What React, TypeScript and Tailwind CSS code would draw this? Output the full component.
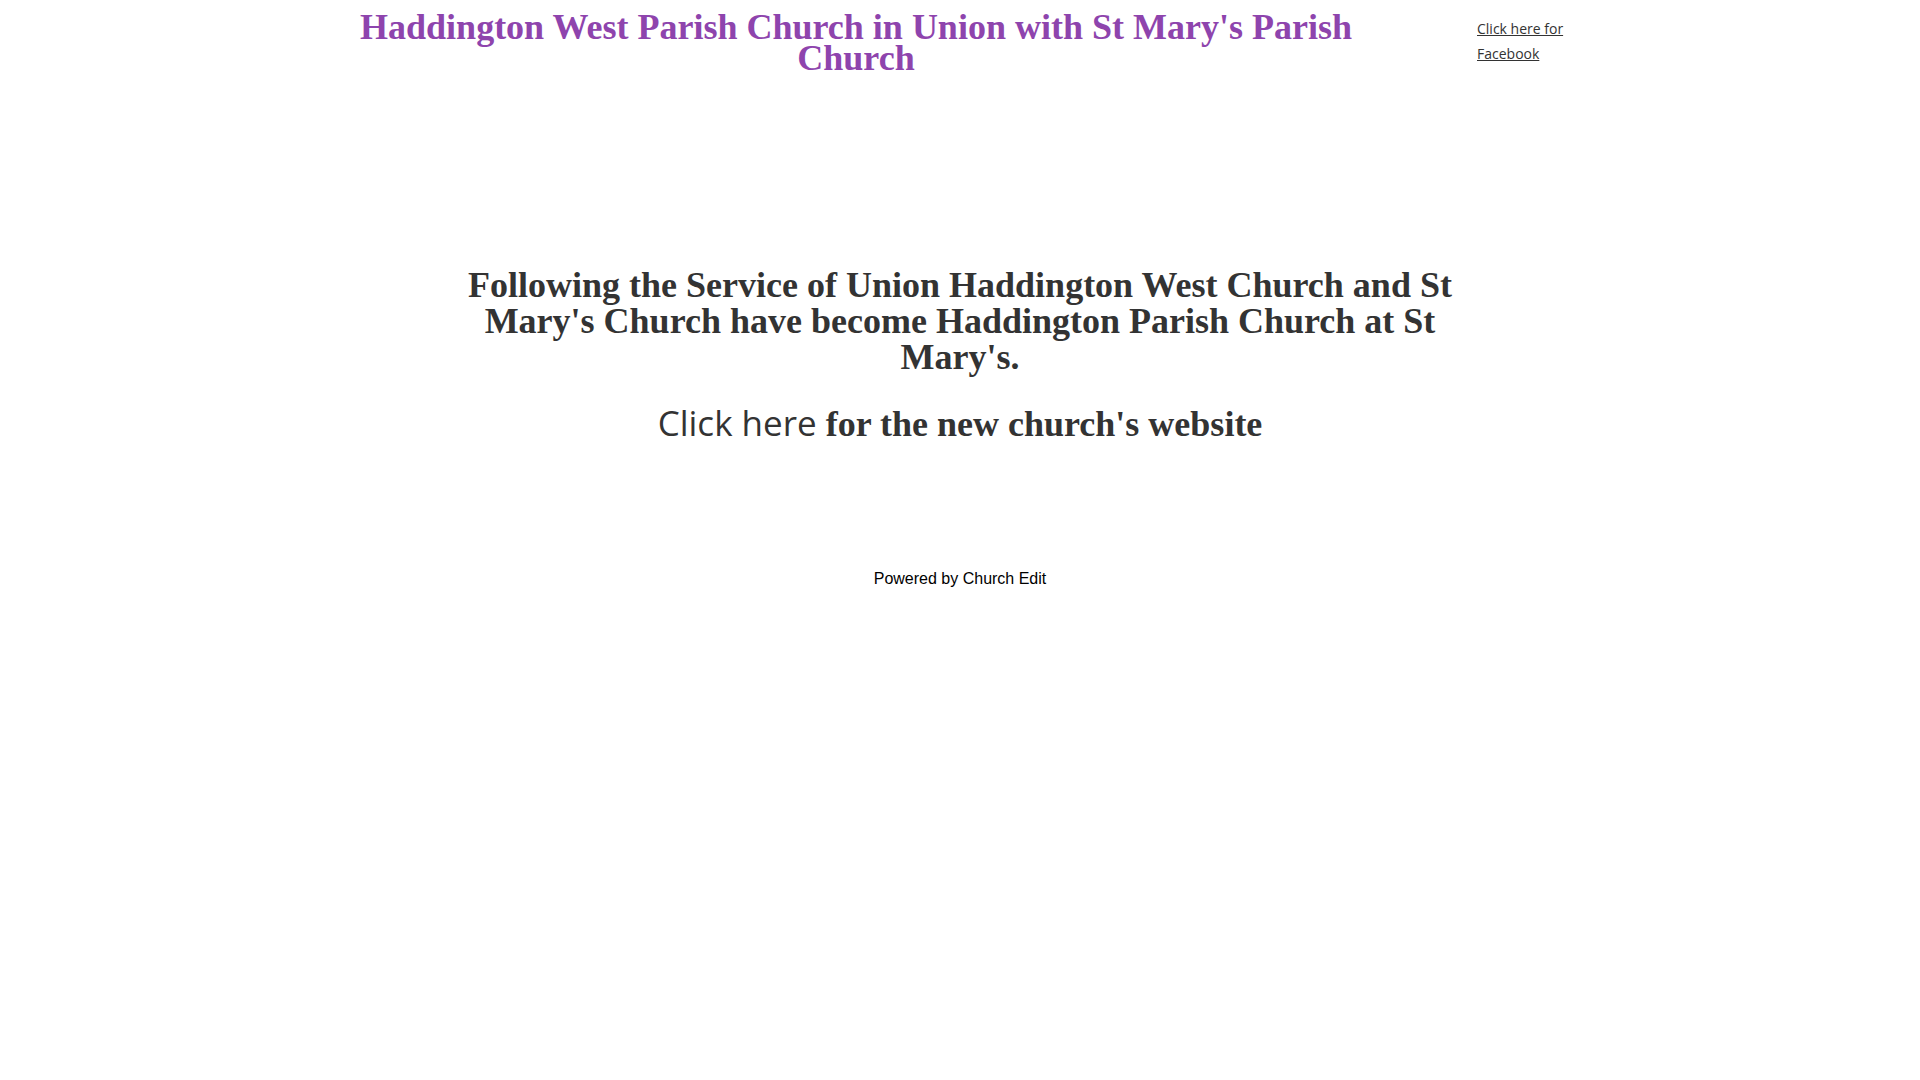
import React from 'react';

export default function App() {
  return (
    <div className="min-h-screen bg-white text-[#333]">
      <div className="mx-auto w-[1200px] flex">
        <div className="w-[992px] shrink-0 pt-[12px]">
          <h1 className="text-center text-[36px] leading-[31px] font-bold text-[#8e44ad] font-['Liberation_Serif',serif]">
            Haddington West Parish Church in Union with St Mary's Parish Church
          </h1>
        </div>
        <div className="shrink-0 pl-[125px] pt-[16px]">
          <a href="#" className="block w-[100px] underline text-[14px] leading-[25px] text-[#333] font-['Open_Sans',sans-serif]">
            Click here for Facebook
          </a>
        </div>
      </div>

      <div className="mx-auto w-[1000px] mt-[193px] text-center font-['Liberation_Serif',serif] font-bold">
        <h2 className="text-[36px] leading-[36px]">
          Following the Service of Union Haddington West Church and St Mary's Church have become Haddington Parish Church at St Mary's.
        </h2>
        <h2 className="mt-[30px] text-[36px] leading-[36px]">
          <a href="#" className="font-normal font-['Open_Sans',sans-serif] text-[35px]">Click here</a> for the new church's website
        </h2>
      </div>

      <p className="mt-[125px] text-center text-[16px] text-black font-['Liberation_Sans',sans-serif]">
        Powered by Church Edit
      </p>
    </div>
  );
}
